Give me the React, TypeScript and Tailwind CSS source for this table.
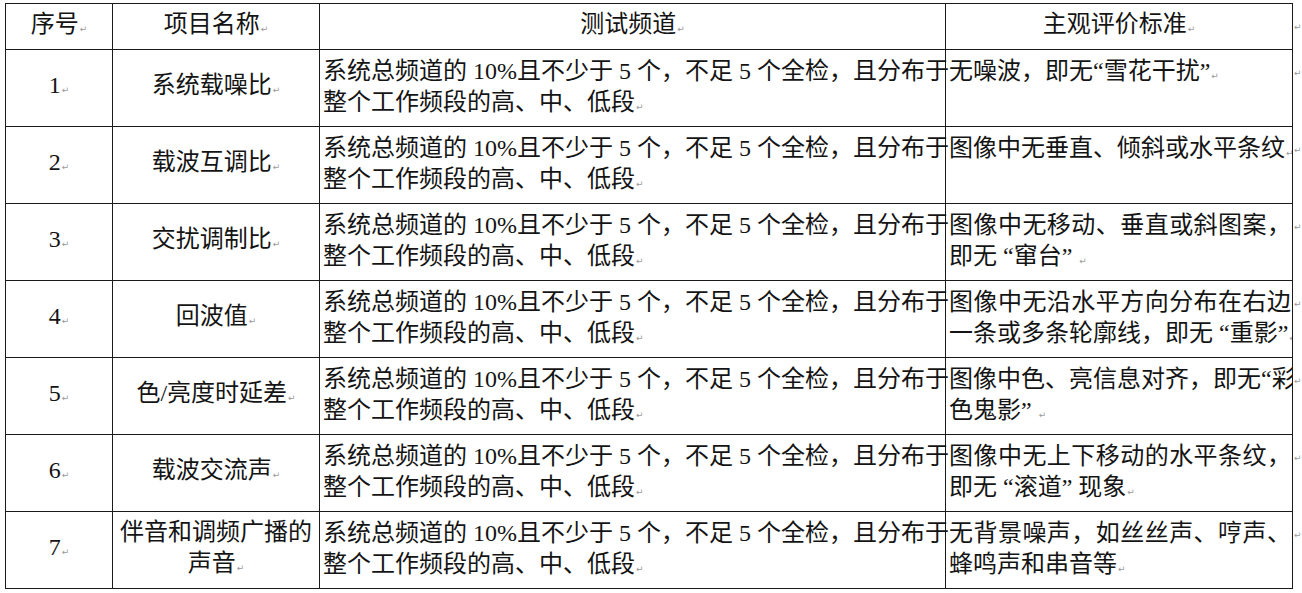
const rows = [
  { no: "1", name: ["系统载噪比"], crit: ["无噪波，即无“雪花干扰”"], justify: false },
  { no: "2", name: ["载波互调比"], crit: ["图像中无垂直、倾斜或水平条纹"], justify: false },
  { no: "3", name: ["交扰调制比"], crit: ["图像中无移动、垂直或斜图案，", "即无 “窜台” "], justify: true },
  { no: "4", name: ["回波值"], crit: ["图像中无沿水平方向分布在右边", "一条或多条轮廓线，即无 “重影”"], justify: true },
  { no: "5", name: ["色/亮度时延差"], crit: ["图像中色、亮信息对齐，即无“彩", "色鬼影” "], justify: true },
  { no: "6", name: ["载波交流声"], crit: ["图像中无上下移动的水平条纹，", "即无 “滚道” 现象"], justify: true },
  { no: "7", name: ["伴音和调频广播的", "声音"], crit: ["无背景噪声，如丝丝声、哼声、", "蜂鸣声和串音等"], justify: true },
];

function Mark() {
  return (
    <span className="text-[9px] text-[#9a9a9a] align-baseline ml-px" style={{ fontFamily: '"DejaVu Sans", sans-serif' }}>
      ↵
    </span>
  );
}

const cell = "border border-[#1a1a1a] p-0";

export default function App() {
  return (
    <div
      className="bg-white w-[1302px] h-[593px] overflow-hidden pl-[5px] pt-[3px] text-[#141414] text-[24px] leading-[31px]"
      style={{ fontFamily: '"Liberation Serif", "Noto Sans CJK SC", serif' }}
    >
      <table className="border-collapse table-fixed w-[1295px]">
        <colgroup>
          <col className="w-[107px]" />
          <col className="w-[207px]" />
          <col className="w-[626px]" />
          <col className="w-[347px]" />
          <col className="w-[8px]" />
        </colgroup>
        <tbody>
          <tr className="h-[46px]">
            <td className={`${cell} text-center align-middle`}>序号<Mark /></td>
            <td className={`${cell} text-center align-middle`}>项目名称<Mark /></td>
            <td className={`${cell} text-center align-middle`}>测试频道<Mark /></td>
            <td className={`${cell} text-center align-middle`}>主观评价标准<Mark /></td>
            <td className="align-top pt-[6px] leading-none"><Mark /></td>
          </tr>
          {rows.map((r) => (
            <tr key={r.no} className="h-[77px]">
              <td className={`${cell} text-center align-middle`}>
                {r.no}
                <Mark />
              </td>
              <td className={`${cell} text-center align-middle whitespace-nowrap`}>
                {r.name.map((l, i) => (
                  <div key={i}>
                    {l}
                    {i === r.name.length - 1 && <Mark />}
                  </div>
                ))}
              </td>
              <td className={`${cell} align-top pt-[6px] pl-[3px] pr-[2px] whitespace-nowrap`}>
                <div className="text-justify [text-align-last:justify]">
                  系统总频道的 10%且不少于 5 个，不足 5 个全检，且分布于
                </div>
                <div>
                  整个工作频段的高、中、低段
                  <Mark />
                </div>
              </td>
              <td className={`${cell} align-top pt-[6px] pl-[3px] whitespace-nowrap overflow-hidden`}>
                {r.crit.map((l, i) => (
                  <div key={i} className={r.justify && i === 0 ? "text-justify [text-align-last:justify] pr-[1px]" : ""}>
                    {l}
                    {i === r.crit.length - 1 && <Mark />}
                  </div>
                ))}
              </td>
              <td className="align-top pt-[6px] leading-none"><Mark /></td>
            </tr>
          ))}
        </tbody>
      </table>
    </div>
  );
}
